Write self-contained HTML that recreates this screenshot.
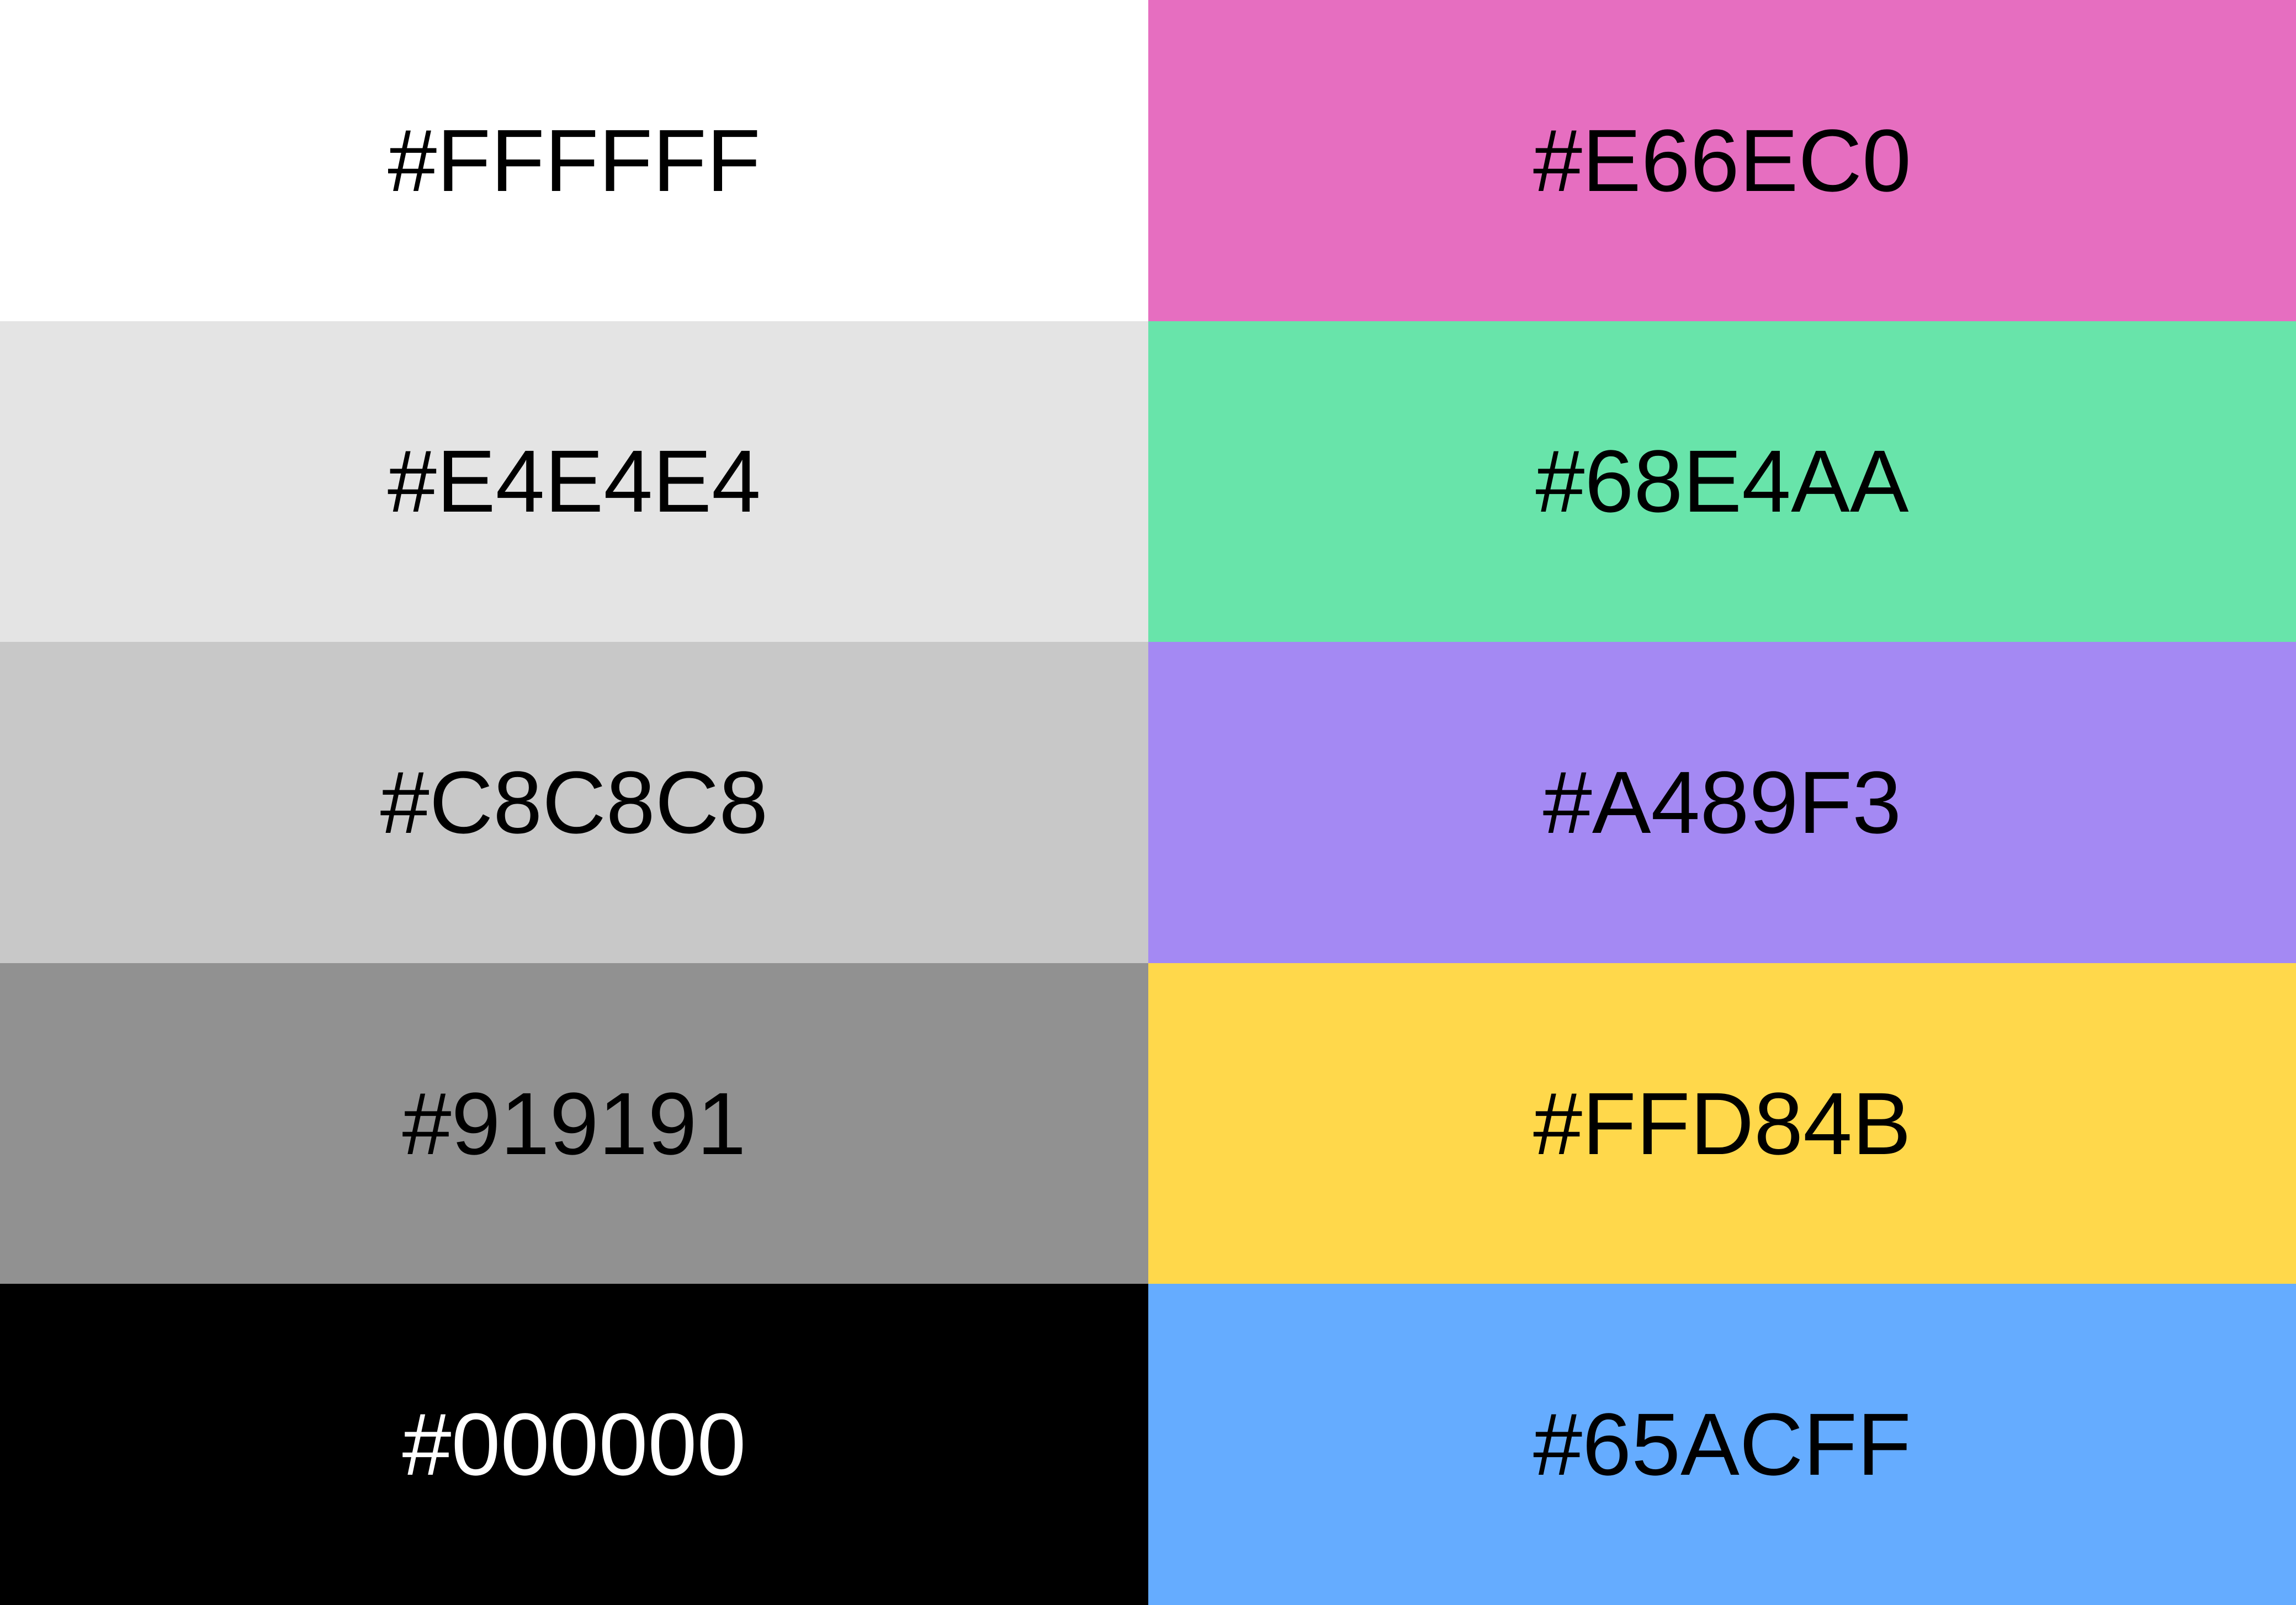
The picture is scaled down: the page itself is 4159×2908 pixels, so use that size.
<!DOCTYPE html>
<html><head><meta charset="utf-8"><style>
html,body{margin:0;padding:0;width:4159px;height:2908px;overflow:hidden}
.g{display:grid;grid-template-columns:2080px 2079px;grid-template-rows:repeat(5,581.6px);width:4159px;height:2908px}
.c{display:flex;align-items:center;justify-content:center;font-family:"Liberation Sans",Arial,sans-serif;font-size:160px;color:#000;line-height:1}
</style></head><body><div class="g">
<div class="c" style="background:#FFFFFF">#FFFFFF</div>
<div class="c" style="background:#E66EC0">#E66EC0</div>
<div class="c" style="background:#E4E4E4">#E4E4E4</div>
<div class="c" style="background:#68E4AA">#68E4AA</div>
<div class="c" style="background:#C8C8C8">#C8C8C8</div>
<div class="c" style="background:#A489F3">#A489F3</div>
<div class="c" style="background:#919191">#919191</div>
<div class="c" style="background:#FFD84B">#FFD84B</div>
<div class="c" style="background:#000000;color:#fff">#000000</div>
<div class="c" style="background:#65ACFF">#65ACFF</div>
</div></body></html>
